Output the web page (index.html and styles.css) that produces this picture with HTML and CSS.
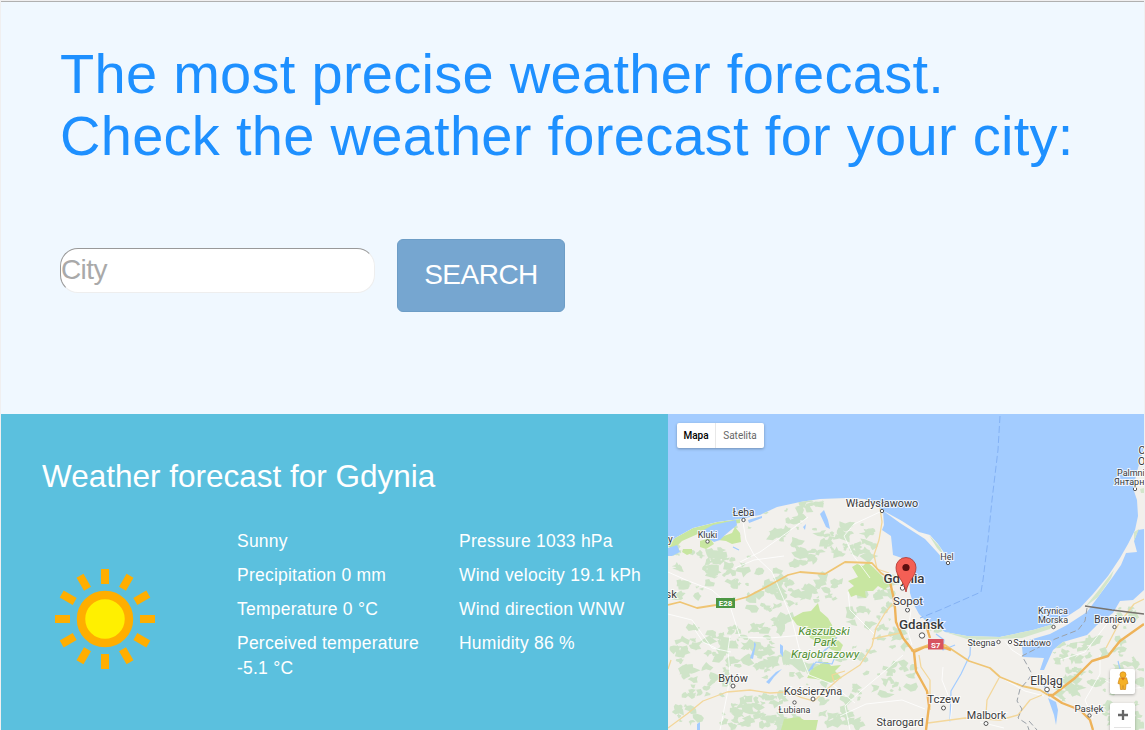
FILE: index.html
```html
<!DOCTYPE html>
<html lang="en">
<head>
<meta charset="utf-8">
<title>Weather forecast</title>
<link rel="stylesheet" href="styles.css">
</head>
<body>
<div class="page">
  <header class="hero">
    <h1 class="hero-title">The most precise weather forecast.<br>Check the weather forecast for your city:</h1>
    <form class="search">
      <input class="search-input" type="text" placeholder="City">
      <button class="search-button" type="button">SEARCH</button>
    </form>
  </header>
  <main class="result">
    <section class="forecast">
      <h2 class="forecast-title">Weather forecast for Gdynia</h2>
      <div class="forecast-body">
        <svg class="sun" viewBox="-52 -52 104 104" width="104" height="104">
          <g stroke="#ffae00" stroke-width="8">
            <path d="M0-50V-35M0 35V50M-50 0H-35M35 0H50"/>
            <path d="M0-50V-35M0 35V50M-50 0H-35M35 0H50" transform="rotate(30)"/>
            <path d="M0-50V-35M0 35V50M-50 0H-35M35 0H50" transform="rotate(60)"/>
          </g>
          <circle r="24" fill="#fff000" stroke="#ffae00" stroke-width="8.5"/>
        </svg>
        <div class="facts facts-main">
          <p>Sunny</p><p>Precipitation 0 mm</p><p>Temperature 0 °C</p><p>Perceived temperature<br>-5.1 °C</p>
        </div>
        <div class="facts">
          <p>Pressure 1033 hPa</p><p>Wind velocity 19.1 kPh</p><p>Wind direction WNW</p><p>Humidity 86 %</p>
        </div>
      </div>
    </section>
    <section class="map">
      <svg class="map-canvas" viewBox="668 414 476 316" width="476" height="316">
        <defs>
          <clipPath id="land"><path id="coast" d="M668 546L675 538L693 528L717 522L740 519L760 515L777 507L800 502L820 499L847 498L865 499L877 505L883 511L884 525L882 530L891 536L893 555L902 558L909 573L910 593L913 603L919 614L927 622L938 627L945 632L967 637L1000 637L1022 635L1022 647L1023 657L1044 658L1040 670L1044 670L1053 650L1063 642L1087 635L1097 625L1113 613L1120 601L1133 600L1144 590V730H668Z"/></clipPath>
        </defs>
        <rect x="668" y="414" width="476" height="316" fill="#a3ccff"/>
        <use href="#coast" fill="#f2f0ec"/>
        <g clip-path="url(#land)">
          <g id="forests" fill="#cfe4c8"></g>
          <path fill="#c8e6a1" d="M668 546L675 538L693 528L717 522L740 519V523L717 526L700 533L682 541L673 550ZM700 541L710 538L714 544L706 549L700 547ZM724 536L732 533L735 527L740 533L741 542L732 544L726 541L718 540ZM683 549L692 549L692 553L687 555L682 552ZM852 567L857 564L863 566L867 562L873 567L878 572L883 577L891 582L885 590L878 586L873 591L865 591L866 598L856 595L851 597L848 590L854 586L848 581L858 577ZM792 618L803 612L811 611L818 603L820 611L828 618L832 625L836 638L843 645L840 652L832 650L826 646L810 638L807 629L797 625ZM807 678L812 669L824 662L828 662L831 666L841 665L835 671L842 678L830 682L816 679ZM781 730L784 719L799 717L804 720L818 720L816 730Z"/>
          <g fill="#a3ccff">
            <path d="M668 548L677 545L680 552L672 556H668ZM700 532L713 525L736 520L737 525L725 535L720 540L714 542L702 534ZM748 520L762 516L762 518L749 523ZM820 514L824 510L828 520L830 529L826 527ZM750 658L754 647L754 642L756 644L753 659ZM780 644L783 646L783 657L780 653ZM766 682L776 672L782 669L774 677L769 684ZM808 671L814 662L813 669ZM820 656L824 650L826 648L822 657ZM697 724L700 722L700 730H697ZM1048 698L1056 702L1058 710L1056 725L1054 715ZM803 527L806 524L805 530Z"/>
          </g>
          <g class="water-line">
            <path d="M971 632L970 655L961 674L951 691L950 722M936 634L944 640L943 650L955 645M809 671L816 662L832 664L835 657M822 653L830 646L837 637M1118 661L1120 669M1042 681L1050 697M733 547L739 550"/>
          </g>
          <g class="minor-road">
            <path d="M743 522L746 540L754 555L772 572L784 600L792 620L800 652L809 675L832 684L855 703M668 572L686 580L712 590L730 606L740 637L770 638L803 635M882 511L854 524L844 536L853 555L870 578M740 562L760 552L788 532L808 517M848 592L850 610L874 634M903 655L886 670L861 691L845 706L850 730M730 636L728 650L730 675L727 695L720 730M911 610L908 632L912 645M943 667L942 680L952 705L950 722M1023 657L1012 650L1000 635L987 637M1060 660L1085 652L1110 620M1105 680L1122 690L1144 687M1100 655L1100 674L1085 700L1093 718M980 722L1004 728M668 614L692 620L712 648L731 652M695 630L703 642L720 650M735 568L754 560L784 556M840 716L866 704L902 700L925 709M1000 677L1025 691L1044 696"/>
          </g>
          <g class="yellow-road">
            <path d="M668 728L687 714L703 701L727 692L750 690L770 693L789 692L800 697L814 701L824 692L840 678L860 665L872 646L876 628L885 613L893 603M834 682L832 675L845 671M880 508L882 522L879 540L874 555L877 569L889 573M872 639L900 633M928 723L965 718L1000 720L1018 715L1030 700L1042 695M999 678L987 700L986 714M919 655L921 667L930 680L930 710M1106 648L1118 625L1134 604L1144 599M668 669L671 660"/>
          </g>
          <g class="main-road">
            <path d="M668 605L680 602L697 608L716 605L725 603L747 597L770 585L788 575L800 572L825 574L845 562L872 563L881 573L890 579M911 651L928 645L945 645L969 661L990 668L1000 677L1022 686L1040 690L1048 695"/>
            <path class="heavy" d="M890 582L893 595L895 608L896 622L903 638L914 652L916 671L927 691L929 706L926 730M914 652L925 647L940 646L951 650M926 625L930 638M1048 695L1053 695L1075 678L1092 661L1108 656L1120 641L1144 624M1050 695L1062 703L1080 710L1090 720L1093 730"/>
          </g>
        </g>
        <path d="M882 510L902 521L919 532L930 535L938 544L947 557L951 563L946 562L937 552L925 539L900 523Z" fill="#f4f2ee"/>
        <path d="M929 535L940 547L944 556L937 548Z" fill="#cfe4c8"/>
        <path d="M945 632L967 636L1000 637L1033 630L1057 623L1080 608L1093 594L1108 576L1120 558L1128 544L1135 530L1138 516L1137 500L1133 488L1138 468L1144 448V529L1138 530L1134 541L1137 552L1126 553L1121 565L1112 578L1098 597L1087 612L1067 625L1050 634L1022 642L970 640Z" fill="#f2f0ec"/>
        <path d="M945 632L967 636L1000 637L1033 630L1054 624L1050 629L1022 638L970 640ZM1085 607L1098 591L1114 570L1111 578L1098 597ZM1134 532L1139 529L1134 541ZM1140 489L1144 488V493H1141Z" fill="#d3e6cb"/>
        <path d="M1000 416L998 450L992 500L988 540L983 580L981 592L940 610L920 618" class="ferry"/>
        <path d="M1087 608L1085 621L1078 630L1055 639L1022 656L1026 663L1032 674L1028 680L1020 689L1017 701L1022 709L1018 718L1027 724L1029 730M1029 721L1037 730" class="border"/>
        <path d="M1085 606L1112 610L1144 614" stroke="#77736e" stroke-width="1.5" fill="none"/>
        <g class="towns">
          <circle cx="743.500" cy="520" r="1.700"/><circle cx="707.500" cy="541.500" r="1.700"/><circle cx="882" cy="511" r="1.700"/><circle cx="948" cy="563" r="1.700"/><circle cx="902.500" cy="588" r="2.200"/><circle cx="907.500" cy="610" r="2"/><circle cx="922" cy="635.500" r="2.700"/><circle cx="733" cy="686" r="2"/><circle cx="813" cy="699" r="2"/><circle cx="794.500" cy="702.500" r="1.700"/><circle cx="943.500" cy="708" r="2"/><circle cx="986" cy="723.500" r="2"/><circle cx="1047" cy="689.500" r="2.300"/><circle cx="998.500" cy="642" r="1.700"/><circle cx="1010" cy="642" r="1.700"/><circle cx="1053.500" cy="627" r="1.700"/><circle cx="1114.500" cy="627" r="1.700"/><circle cx="1089.500" cy="715.500" r="1.700"/><circle cx="1135" cy="489" r="1.700"/>
        </g>
        <g class="labels">
          <text x="743.500" y="515.500" font-size="10">Łeba</text>
          <text x="707.500" y="538" class="small">Kluki</text>
          <text x="882" y="507">Władysławowo</text>
          <text x="947" y="559.500" class="small">Hel</text>
          <text x="904" y="582.500" class="city">Gdynia</text>
          <text x="908" y="605" font-size="11.500">Sopot</text>
          <text x="921.500" y="629" class="city">Gdańsk</text>
          <text x="665.500" y="597.500" font-size="11" text-anchor="start">sk</text>
          <text x="668" y="543" font-size="10" text-anchor="start">y</text>
          <text x="733" y="681.500">Bytów</text>
          <text x="813" y="694.800">Kościerzyna</text>
          <text x="794.500" y="713" class="small">Łubiana</text>
          <text x="943.500" y="703" font-size="11.500">Tczew</text>
          <text x="986.500" y="719">Malbork</text>
          <text x="900" y="726">Starogard</text>
          <text x="1046.500" y="684.500" font-size="12">Elbląg</text>
          <text x="981.500" y="645.500" class="small">Stegna</text>
          <text x="1032" y="645.500" class="small">Sztutowo</text>
          <text x="1053" y="614" class="small">Krynica</text>
          <text x="1053" y="623" class="small">Morska</text>
          <text x="1115" y="623" font-size="10">Braniewo</text>
          <text x="1089" y="712" font-size="9.700">Pasłęk</text>
          <text x="1117" y="475.500" class="small" text-anchor="start">Palmni</text>
          <text x="1114" y="485" class="small" text-anchor="start">Янтарн</text>
          <text x="1138.500" y="454" font-size="10.500" text-anchor="start">C</text>
          <text x="1138" y="464.500" font-size="10.500" text-anchor="start">O</text>
          <g class="park"><text x="824" y="634.500">Kaszubski</text><text x="825" y="646">Park</text><text x="825" y="657.500">Krajobrazowy</text></g>
        </g>
        <g class="shields"><rect x="716" y="598" width="19" height="10" fill="#4c9643"/><text x="725.500" y="606.200">E28</text><rect x="928" y="639" width="15.500" height="10.500" fill="#d75461"/><text x="935.700" y="647.700">S7</text></g>
        <path d="M906 592C904 580 896 577 896 567.500A10 10 0 0 1 916 567.500C916 577 908 580 906 592Z" fill="#f45f55" stroke="#ad332d" stroke-width=".8"/>
        <circle cx="906" cy="567.500" r="3.600" fill="#5d0f0f"/>
      </svg>
      <div class="map-types"><span class="map-type active">Mapa</span><span class="map-type">Satelita</span></div>
      <div class="map-control pegman"><svg viewBox="0 0 12 20" width="12" height="20"><g fill="#f5b126" stroke="#cf8717" stroke-width=".7"><path d="M2.500 6.800L1 12.500L3 13L3.500 18.500H5.600L6 14.500L6.400 18.500H8.500L9 13L11 12.500L9.500 6.800Z"/><circle cx="6" cy="3.800" r="3"/></g><path d="M4 7H8L6 9.500Z" fill="#dc7616"/></svg></div>
      <div class="map-control zoom-control"><svg viewBox="0 0 10 10" width="10" height="10"><path d="M5 0V10M0 5H10" stroke="#666" stroke-width="2.300"/></svg></div>
    </section>
  </main>
</div>
<script src="map.js"></script>
</body>
</html>
```

FILE: styles.css
```css
* { box-sizing: border-box; }
body { margin: 0; overflow: hidden; font-family: "Liberation Sans", Arial, sans-serif; font-size: 17.5px; line-height: 25px; color: #fff; background: #f0eff0; }
.page { height: 730px; padding: 1px 1px 0; display: flex; flex-direction: column; }
.hero { height: 413px; border-top: 1px solid #b0b0b0; background: #f0f8ff; padding: 41px 59px 0; }
.hero-title { margin: 0; font-size: 56px; line-height: 61.6px; font-weight: 400; letter-spacing: .28px; color: #1e90ff; white-space: nowrap; }
.search { display: flex; align-items: flex-start; gap: 22px; margin: 72.8px 0 0; }
.search-input { width: 315px; height: 45px; margin-top: 9px; padding: 0 0 1px; border: 1px solid; border-color: #999 #eee #eee #999; border-radius: 18px; background: #fff; font: 28px "Liberation Sans", Arial, sans-serif; letter-spacing: -.6px; }
.search-input::placeholder { color: #a9a9a9; opacity: 1; }
.search-button { width: 168px; height: 73px; padding: 0 0 1px; border: 1px solid #6d9dc6; border-radius: 6px; background: #76a6d0; color: #fff; font: 28px "Liberation Sans", Arial, sans-serif; letter-spacing: -.5px; }
.result { display: flex; height: 316px; }
.forecast { width: 667px; padding: 45px 0 0 41px; background: #5bc0de; }
.forecast-title { margin: 0; font-size: 31.5px; line-height: 35px; font-weight: 400; }
.forecast-body { display: flex; margin-top: 35px; }
.sun { margin: 38px 0 0 11px; filter: blur(.5px); }
.facts { letter-spacing: .23px; }
.facts-main { width: 222px; margin-left: 80px; }
.facts p { margin: 0 0 9px; white-space: nowrap; }
.map { position: relative; width: 476px; height: 316px; overflow: hidden; font-family: Roboto, sans-serif; }
.map-canvas { display: block; }
.map-types { position: absolute; left: 9px; top: 9px; height: 25px; display: flex; border-radius: 2px; background: #fff; box-shadow: 0 1px 3px rgba(0,0,0,.3); font-size: 10px; line-height: 25px; color: #666; }
.map-type { width: 48px; text-align: center; }
.map-type.active { width: 39px; border-right: 1px solid #e8e8e8; font-weight: 500; color: #000; }
.map-control { position: absolute; right: 9px; width: 25px; display: flex; justify-content: center; background: #fff; border-radius: 2px; box-shadow: 0 1px 3px rgba(0,0,0,.3); }
.pegman { top: 255px; height: 25px; padding-top: 2px; }
.zoom-control { top: 289px; height: 50px; padding-top: 7px; }
.zoom-control::after { content: ""; position: absolute; top: 24px; left: 4px; width: 17px; height: 1px; background: #e3e3e3; }
.water-line, .minor-road, .yellow-road, .main-road, .ferry, .border { fill: none; stroke-linejoin: round; }
.water-line { stroke: #a3ccff; stroke-width: 1.2; }
.minor-road { stroke: #fff; stroke-width: 1; stroke-opacity: .8; }
.yellow-road { stroke: #f3d79b; stroke-width: 1.3; }
.main-road { stroke: #efc574; stroke-width: 1.8; }
.heavy { stroke: #eeb35a; stroke-width: 2.4; }
.ferry { stroke: #83b1f4; stroke-width: 1; stroke-dasharray: 7 3; }
.border { stroke: #9ba1a8; stroke-width: 1; stroke-dasharray: 6 3; }
.towns { fill: #fff; stroke: #555; stroke-width: 1; }
.labels { font-size: 10.8px; fill: #3a3a3a; text-anchor: middle; stroke: #fff; stroke-width: 2px; stroke-opacity: .8; paint-order: stroke; }
.small { font-size: 9px; }
.city { font-size: 13.3px; font-weight: 500; }
.park { fill: #4f8f30; font-size: 11.7px; font-style: italic; }
.shields { fill: #fff; font-size: 8px; font-weight: 700; text-anchor: middle; }
```

FILE: map.js
```js
// Woodland areas: centre x, centre y, half width, half height, number of patches.
const woods = [
  [785,510,22,4,9], [818,503,15,2,5], [800,525,16,8,9], [853,540,20,16,26], [805,552,12,12,12],
  [760,535,24,9,10], [700,562,28,15,26], [735,562,24,10,12], [757,584,26,14,22],
  [788,595,24,12,16], [690,588,20,9,12], [825,545,13,12,10], [825,590,19,12,12],
  [757,620,30,15,26], [700,640,24,14,18], [745,650,28,17,28], [778,665,22,16,22],
  [710,682,28,16,22], [760,710,28,17,32], [695,713,18,9,8], [785,723,14,7,10],
  [840,710,20,16,20], [875,683,22,12,12], [815,670,20,15,12], [885,605,9,25,16],
  [900,675,14,16,12], [865,620,18,10,6], [875,585,18,10,10], [893,638,16,10,10],
  [1072,662,18,18,22], [1105,640,20,14,12], [1130,665,16,22,18], [1095,685,22,10,12],
  [1125,712,20,15,16], [1065,690,9,10,7], [850,730,25,9,10], [935,630,8,3,4],
  [1130,615,14,7,7], [680,660,13,12,8], [735,720,18,10,9], [860,655,20,8,6]
];
let seed = 17;
const random = () => (seed = (seed * 16807) % 2147483647) / 2147483647;
let outline = "";
for (const [cx, cy, rx, ry, count] of woods) {
  for (let i = 0; i < count; i++) {
    const x = cx + (random() * 2 - 1) * rx;
    const y = cy + (random() * 2 - 1) * ry;
    const size = 1.3 + random() * 4.8;
    for (let k = 0; k < 8; k++) {
      const angle = k * Math.PI / 4;
      const radius = size * (0.25 + random() * 1.15);
      outline += (k ? "L" : "M") + (x + Math.cos(angle) * radius * 1.2).toFixed(1) + " " + (y + Math.sin(angle) * radius * 0.9).toFixed(1);
    }
    outline += "Z";
  }
}
const forests = document.createElementNS("http://www.w3.org/2000/svg", "path");
forests.setAttribute("d", outline);
document.getElementById("forests").append(forests);
```
